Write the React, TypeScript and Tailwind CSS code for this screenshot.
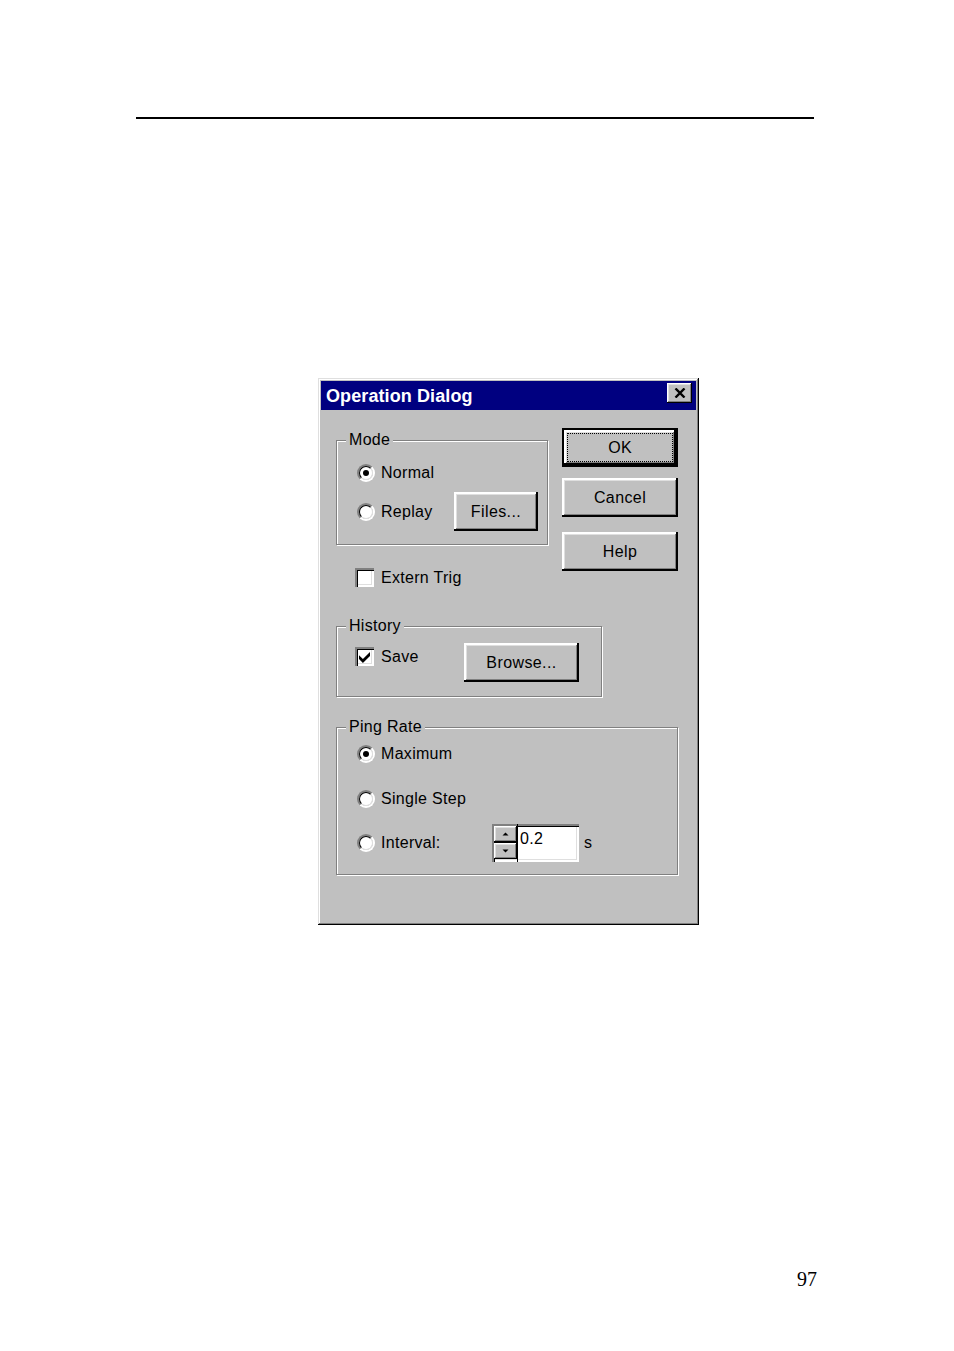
import type { ReactNode } from 'react';

const raised =
  'shadow-[inset_-2px_-2px_0_#000,inset_2px_2px_0_#fff,inset_-3px_-3px_0_#808080,inset_3px_3px_0_#dfdfdf]';
const raisedSmall =
  'shadow-[inset_-1px_-1px_0_#000,inset_1px_1px_0_#fff,inset_-2px_-2px_0_#808080,inset_2px_2px_0_#dfdfdf]';
const sunken =
  'shadow-[inset_2px_2px_0_#808080,inset_3px_3px_0_#000,inset_-2px_-2px_0_#fff,inset_-3px_-3px_0_#dfdfdf]';

function Radio({ checked = false }: { checked?: boolean }) {
  return (
    <span className="flex h-[18px] w-[18px] shrink-0 rounded-full border-2 border-t-[#808080] border-r-white border-b-white border-l-[#808080]">
      <span className="flex h-full w-full items-center justify-center rounded-full border-[1.5px] border-t-black border-r-[#dfdfdf] border-b-[#dfdfdf] border-l-black bg-white">
        {checked ? <span className="h-[6px] w-[6px] rounded-full bg-black" /> : null}
      </span>
    </span>
  );
}

function Check({ checked = false }: { checked?: boolean }) {
  return (
    <span
      className={`flex h-[19px] w-[19px] shrink-0 items-center justify-center bg-white ${sunken}`}
    >
      {checked ? (
        <svg width="11" height="11" viewBox="0 0 7 7" className="mt-[1px]">
          <polygon points="0,2 2.5,4.5 7,0 7,2.5 2.5,7 0,4.5" fill="#000" />
        </svg>
      ) : null}
    </span>
  );
}

function Button({
  children,
  className,
}: {
  children: ReactNode;
  className?: string;
}) {
  return (
    <button
      type="button"
      className={`flex items-center justify-center bg-[#c0c0c0] tracking-[0.4px] ${raised} ${className ?? ''}`}
    >
      {children}
    </button>
  );
}

function Group({
  label,
  className,
  children,
}: {
  label: string;
  className?: string;
  children: ReactNode;
}) {
  return (
    <div
      className={`relative flex flex-col border border-[#808080] shadow-[inset_1px_1px_0_#fff,1px_1px_0_#fff] ${className ?? ''}`}
    >
      <span className="absolute -top-[10px] left-[9px] bg-[#c0c0c0] px-[3px] leading-[18px]">
        {label}
      </span>
      {children}
    </div>
  );
}

function SpinBox({ value }: { value: string }) {
  return (
    <div className={`flex h-[38px] w-[87px] bg-white ${sunken}`}>
      <div className="flex w-[26px] flex-col border-r border-black pt-[2px] pb-[3px] pl-[2px]">
        <span
          className={`flex flex-1 items-center justify-center bg-[#c0c0c0] ${raisedSmall}`}
        >
          <svg width="7" height="4" viewBox="0 0 7 4">
            <polygon points="0.5,3.5 3.5,0.5 6.5,3.5" fill="#000" />
          </svg>
        </span>
        <span
          className={`flex flex-1 items-center justify-center border-t border-black bg-[#c0c0c0] ${raisedSmall}`}
        >
          <svg width="7" height="4" viewBox="0 0 7 4">
            <polygon points="0.5,0.5 6.5,0.5 3.5,3.5" fill="#000" />
          </svg>
        </span>
      </div>
      <span className="pt-[6px] pl-[2px]">{value}</span>
    </div>
  );
}

export default function App() {
  return (
    <div className="h-[1351px] w-[954px] overflow-hidden bg-white">
      <div className="pt-[117px] pl-[136px]">
        <div className="h-[2px] w-[678px] bg-black" />
      </div>

      <div
        className={`mt-[259px] ml-[318px] flex h-[547px] w-[381px] flex-col bg-[#c0c0c0] p-[3px] font-['Liberation_Sans',Arial,sans-serif] text-[16px] leading-[18px] tracking-[0.3px] text-black shadow-[inset_-1px_-1px_0_#000,inset_1px_1px_0_#dfdfdf,inset_-2px_-2px_0_#808080,inset_2px_2px_0_#fff]`}
      >
        <div className="flex h-[29px] items-center justify-between bg-[#000080] pr-[4px] pl-[5px]">
          <span className="text-[18px] font-bold tracking-[0.1px] text-white">Operation Dialog</span>
          <span
            className={`mt-[2px] flex h-[20px] w-[25px] items-center justify-center self-start bg-[#c0c0c0] ${raisedSmall}`}
          >
            <svg width="12" height="10" viewBox="0 0 12 10">
              <path d="M1.5 0.5 L10.5 9.5 M10.5 0.5 L1.5 9.5" stroke="#000" strokeWidth="2.4" />
            </svg>
          </span>
        </div>

        <div className="flex flex-col pl-[15px]">
          <div className="flex pt-[18px]">
            <div className="flex w-[226px] flex-col pt-[12px]">
              <Group label="Mode" className="h-[105px] w-[212px] pt-[22px] pr-[9px] pl-[20px]">
                <div className="flex h-[20px] items-center gap-[6px]">
                  <Radio checked />
                  Normal
                </div>
                <div className="mt-[9px] flex items-center">
                  <div className="flex items-center gap-[6px]">
                    <Radio />
                    Replay
                  </div>
                  <Button className="ml-auto h-[39px] w-[84px]">Files...</Button>
                </div>
              </Group>
              <div className="mt-[23px] ml-[19px] flex items-center gap-[7px]">
                <Check />
                Extern Trig
              </div>
            </div>

            <div className="flex flex-col">
              <div className="h-[39px] w-[116px] border-2 border-black">
                <div className={`h-full w-full bg-[#c0c0c0] p-[3px] ${raised}`}>
                  <div className="flex h-full w-full items-center justify-center border border-dotted border-black">
                    OK
                  </div>
                </div>
              </div>
              <Button className="mt-[11px] h-[39px] w-[116px]">Cancel</Button>
              <Button className="mt-[15px] h-[39px] w-[116px]">Help</Button>
            </div>
          </div>

          <Group label="History" className="mt-[39px] h-[71px] w-[266px] pt-[16px] pl-[18px]">
            <div className="flex items-start">
              <div className="mt-[4px] flex w-[109px] items-center gap-[7px]">
                <Check checked />
                Save
              </div>
              <Button className="h-[39px] w-[115px]">Browse...</Button>
            </div>
          </Group>

          <Group label="Ping Rate" className="mt-[30px] h-[148px] w-[342px] pt-[16px] pl-[20px]">
            <div className="flex h-[20px] items-center gap-[6px]">
              <Radio checked />
              Maximum
            </div>
            <div className="mt-[25px] flex h-[20px] items-center gap-[6px]">
              <Radio />
              Single Step
            </div>
            <div className="mt-[15px] flex items-center">
              <div className="flex w-[135px] items-center gap-[6px]">
                <Radio />
                Interval:
              </div>
              <SpinBox value="0.2" />
              <span className="ml-[5px]">s</span>
            </div>
          </Group>
        </div>
      </div>

      <div className="mt-[343px] ml-[797px] font-['Liberation_Serif','Times_New_Roman',serif] text-[20px] leading-[23px] text-black">
        97
      </div>
    </div>
  );
}
